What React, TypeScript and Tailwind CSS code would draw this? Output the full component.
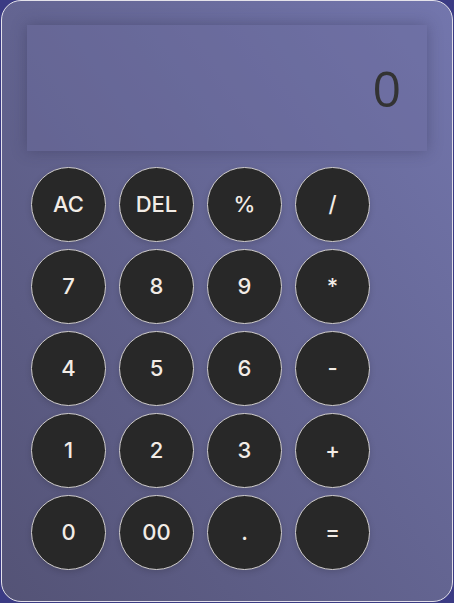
const keys = ['AC', 'DEL', '%', '/', '7', '8', '9', '*', '4', '5', '6', '-', '1', '2', '3', '+', '0', '00', '.', '=']

function Key({ label }: { label: string }) {
  return (
    <button
      type="button"
      className="flex h-[75px] w-[75px] items-center justify-center rounded-full border border-[#d0cdcd] bg-[#282828] text-[22px] font-medium text-[#f2ece6] shadow-[0_2px_6px_rgba(0,0,0,0.15)]"
      style={{ fontFamily: 'Inter, "Open Sans", sans-serif' }}
    >
      {label}
    </button>
  )
}

export default function App() {
  return (
    <div className="h-[603px] w-[454px] bg-[#3b3b84] pl-px">
      <div className="h-[602px] w-[452px] rounded-[20px] border border-[#e4e2ea] bg-linear-to-bl from-[#7376ad] to-[#545376] pt-6 pl-[25px]">
        <div className="flex h-[126px] w-[400px] items-center justify-end bg-[#6b6b9e]/40 pr-[26px] shadow-[0_0_14px_rgba(40,40,70,0.35)]">
          <span
            className="text-[50px] leading-none text-[#333333]"
            style={{ fontFamily: '"Open Sans", sans-serif' }}
          >
            0
          </span>
        </div>
        <div className="mt-[16px] grid w-[340px] grid-cols-[repeat(4,75px)] gap-x-[13px] gap-y-[7px] pl-[4px]">
          {keys.map((k) => (
            <Key key={k} label={k} />
          ))}
        </div>
      </div>
    </div>
  )
}
